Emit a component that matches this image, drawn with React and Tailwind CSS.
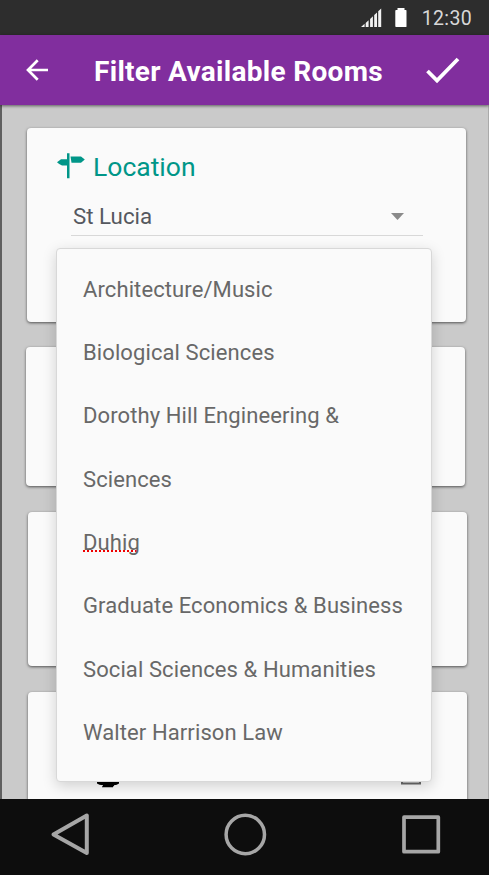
const card =
  "w-[439px] shrink-0 rounded-[4px] bg-[#fafafa] shadow-[0_1px_3px_rgba(0,0,0,0.6)]";

const buildings = [
  "Architecture/Music",
  "Biological Sciences",
  "Dorothy Hill Engineering &",
  "Sciences",
  "Duhig",
  "Graduate Economics & Business",
  "Social Sciences & Humanities",
  "Walter Harrison Law",
];

function StatusBar() {
  return (
    <div className="flex h-[35px] shrink-0 items-center justify-end bg-[#2d2d2d] pr-[17px] text-[#d8d8d8]">
      <svg width="21" height="20" viewBox="0 0 21 20" className="mt-[1px] mr-[13px]" fill="#f2f2f2">
        <path d="M0 19 3.6 15.800V19zM4.700 15l2.900-2.700V19H4.700zM9.100 11l2.800-2.700V19H9.100zM13.200 7.100l2.800-2.700V19h-2.800zM17.200 3.300 20.200 0.500V19h-3z" />
      </svg>
      <svg width="12" height="20" viewBox="0 0 12 20" className="mr-[15px]" fill="#fff">
        <path d="M2.500 0h7v2H11q.5 0 .5 1v15.500q0 .5-1 .5H1q-.7 0-.7-1V3q0-1 .7-1h1.500z" />
      </svg>
      <span className="mt-[2px] text-[19.5px] tracking-[0.35px]">12:30</span>
    </div>
  );
}

function AppBar() {
  return (
    <header className="relative z-10 flex h-[70px] shrink-0 items-center bg-[#812e9e] text-white shadow-[0_1px_3px_rgba(0,0,0,0.55)]">
      <svg width="24" height="24" viewBox="0 0 24 24" className="ml-[25px]" fill="none" stroke="white" strokeWidth="2.7">
        <path d="M12.700 2.200 3 12l9.700 9.800M3 12H23" />
      </svg>
      <h1 className="ml-[45px] w-[300px] whitespace-nowrap pt-[3px] text-[28px] font-bold leading-[34px] tracking-[0.3px]">
        Filter Available Rooms
      </h1>
      <svg width="36" height="28" viewBox="0 0 36 28" className="ml-[31px]" fill="none" stroke="white" strokeWidth="3.8">
        <path d="M2.500 15 12 24.500 33 3" />
      </svg>
    </header>
  );
}

function LocationCard() {
  return (
    <section className={`${card} ml-[25px] h-[194px]`}>
      <div className="ml-[30px] flex h-[78px] items-center text-[#009688]">
        <svg width="28" height="26" viewBox="0 0 28 26" className="-mt-[2px]" fill="currentColor">
          <path d="M10 0.300h2.500v25H10zM0 9.200l4-3h6v6.300H5q-2-.5-5-3.300zM13.500 3.400h10.500l3.800 3-3.800 3.400H14.500z" />
        </svg>
        <h2 className="ml-[8px] whitespace-nowrap text-[26.5px] leading-[32px]">Location</h2>
      </div>
      <div className="ml-[44px] flex h-[30px] w-[352px] items-center justify-between border-b border-[#d8d8d8] pr-[19px] pl-[2px]">
        <span className="-mt-[9px] text-[22.3px] leading-[28px] text-[#55585f]">St Lucia</span>
        <svg width="13" height="7" viewBox="0 0 13 7" className="-mt-[9px]" fill="#8a8a8a">
          <path d="M0 0h13L6.500 7z" />
        </svg>
      </div>
    </section>
  );
}

function BuildingMenu() {
  return (
    <ul className="absolute top-[248px] left-[56px] z-20 h-[534px] w-[376px] rounded-[4px] border border-[#d8d8d8] bg-[#fafafa] pt-[8.5px] pl-[26px] shadow-[0_4px_14px_rgba(0,0,0,0.17)]">
      {buildings.map((name) => (
        <li key={name} className="h-[63.4px] whitespace-nowrap text-[22px] leading-[63.4px] tracking-[0.1px] text-[#686868]">
          <span
            className={
              name === "Duhig"
                ? "underline decoration-[#f00000] decoration-dotted decoration-[2px] underline-offset-[0px] [text-decoration-skip-ink:none]"
                : ""
            }
          >
            {name}
          </span>
        </li>
      ))}
    </ul>
  );
}

function NavBar() {
  return (
    <nav className="relative z-30 flex h-[76px] shrink-0 items-start justify-between bg-[#0d0d0d] pt-[13px] pr-[47px] pl-[50px]">
      <svg width="40" height="44" viewBox="0 0 40 44" fill="none" stroke="#a6a6a6" strokeWidth="4" strokeLinejoin="round">
        <path d="M3.500 22.500 36.800 3.500v37.500z" />
      </svg>
      <svg width="44" height="44" viewBox="0 0 44 44" fill="none" stroke="#a6a6a6" strokeWidth="3.5">
        <circle cx="22.300" cy="22.500" r="19.200" />
      </svg>
      <svg width="42" height="44" viewBox="0 0 42 44" fill="none" stroke="#a6a6a6" strokeWidth="3.7" strokeLinejoin="round">
        <path d="M4 5.200h34.300v34.500H4z" />
      </svg>
    </nav>
  );
}

export default function App() {
  return (
    <div className="relative flex h-[875px] w-[489px] flex-col overflow-hidden font-['Roboto',sans-serif]">
      <StatusBar />
      <AppBar />
      <main className="flex h-[694px] shrink-0 flex-col overflow-hidden border-r border-l-2 border-r-[#aaaaaa] border-l-[#606060] bg-[#cacaca] pt-[23px]">
        <LocationCard />
        <section className={`${card} mt-[25px] ml-[24px] h-[139px]`} />
        <section className={`${card} mt-[26px] ml-[26px] h-[154px]`} />
        <section className={`${card} mt-[26px] ml-[26px] flex h-[140px] items-start pt-[76px]`}>
          <svg width="22" height="20" viewBox="0 0 22 20" className="ml-[69px]">
            <path d="M0 0h22v15.500q-2 1.500-5 1.800v.9h-1v1H5v-1h1v-.9q-4-.3-6-1.800z" />
          </svg>
          <span className="-mt-[1px] ml-[14px] text-[20px] leading-[16px] text-[#888888]">TV</span>
          <svg width="20" height="18" viewBox="0 0 20 18" className="mr-[46px] ml-auto" fill="none" stroke="#686868" strokeWidth="2">
            <path d="M1 1h18v14.500H1z" />
          </svg>
        </section>
      </main>
      <BuildingMenu />
      <NavBar />
    </div>
  );
}
